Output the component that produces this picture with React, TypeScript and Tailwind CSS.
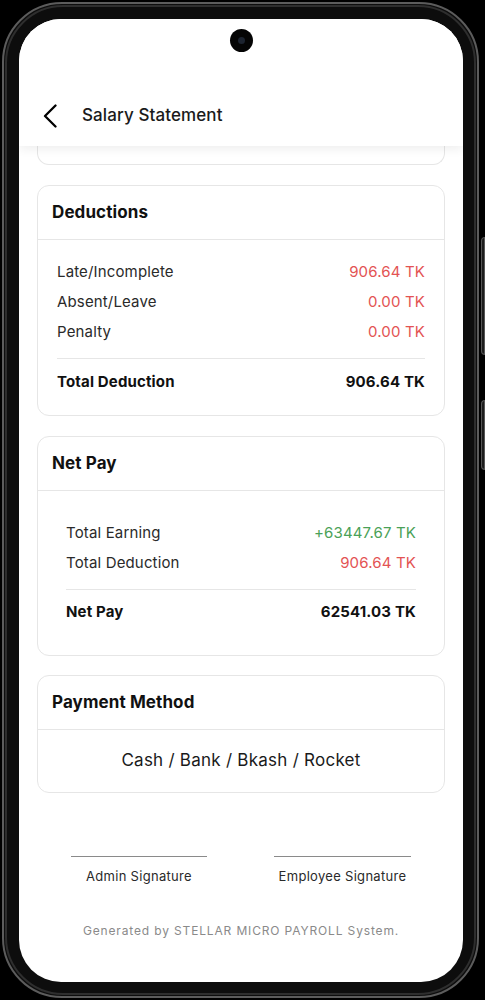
const deductions = [
  { label: 'Late/Incomplete', value: '906.64 TK' },
  { label: 'Absent/Leave', value: '0.00 TK' },
  { label: 'Penalty', value: '0.00 TK' },
];

function Row({ label, value, color }: { label: string; value: string; color: string }) {
  return (
    <div className="flex h-[30px] items-center justify-between text-[15px] tracking-[0.15px]">
      <span className="text-[#2a2a2a]">{label}</span>
      <span className={color}>{value}</span>
    </div>
  );
}

function CardHeader({ title }: { title: string }) {
  return (
    <div className="flex h-[54px] items-center border-b border-[#e6e6e6] px-[14px]">
      <h2 className="text-[17px] font-bold tracking-[0.1px] text-[#111]">{title}</h2>
    </div>
  );
}

export default function App() {
  return (
    <div
      className="relative h-[1000px] w-[485px] overflow-hidden bg-black pl-[2px] pt-[2px]"
      style={{ fontFamily: 'Inter, "Noto Sans", sans-serif' }}
    >
      {/* side buttons */}
      <div className="absolute right-0 top-[237px] h-[118px] w-[4px] rounded-l-sm border border-[#555] bg-[#1c1c1c]" />
      <div className="absolute right-0 top-[400px] h-[70px] w-[4px] rounded-l-sm border border-[#555] bg-[#1c1c1c]" />

      {/* Phone body */}
      <div className="h-[996px] w-[477px] rounded-[60px] border-2 border-[#5c5c5c] bg-[#0d0d0d] p-[1px]">
        <div className="h-full w-full rounded-[58px] border-[2px] border-[#2e2e2e] px-[12px] pt-[12px]">
          {/* Screen */}
          <div className="relative flex h-[963px] w-[444px] flex-col overflow-hidden rounded-[42px] bg-white">
            {/* Camera */}
            <div className="absolute left-[211px] top-[10px] z-20 flex h-[23px] w-[23px] items-center justify-center rounded-full bg-[#050505]">
              <div className="h-[7px] w-[7px] rounded-full bg-[#1d2430]" />
            </div>

            {/* Header */}
            <header className="relative z-10 bg-white pt-[75px] pb-[8px] shadow-[0_3px_10px_rgba(0,0,0,0.07)]">
              <div className="flex h-[44px] items-center px-[24px]">
                <svg width="14" height="24" viewBox="0 0 14 24" fill="none">
                  <path d="M12.5 1.5 L2 12 L12.5 22.5" stroke="#000" strokeWidth="2.3" strokeLinecap="round" strokeLinejoin="round" />
                </svg>
                <span className="ml-[25px] text-[17px] font-medium tracking-[0.1px] text-[#1a1a1a]">Salary Statement</span>
              </div>
            </header>

            {/* Content */}
            <main className="flex flex-1 flex-col px-[18px]">
              <div className="h-[19px] rounded-b-[12px] border border-t-0 border-[#e6e6e6]" />

              {/* Deductions */}
              <section className="mt-[20px] rounded-[12px] border border-[#e6e6e6]">
                <CardHeader title="Deductions" />
                <div className="px-[19px] pt-[17px] pb-[22px]">
                  {deductions.map((d) => (
                    <Row key={d.label} label={d.label} value={d.value} color="text-[#e35353]" />
                  ))}
                  <div className="mt-[11px] border-t border-[#e6e6e6]" />
                  <div className="mt-[12px] flex h-[22px] items-center justify-between text-[15px] font-bold tracking-[0.15px] text-[#111]">
                    <span>Total Deduction</span>
                    <span>906.64 TK</span>
                  </div>
                </div>
              </section>

              {/* Net Pay */}
              <section className="mt-[20px] rounded-[12px] border border-[#e6e6e6]">
                <CardHeader title="Net Pay" />
                <div className="px-[28px] pt-[27px] pb-[32px]">
                  <Row label="Total Earning" value="+63447.67 TK" color="text-[#4aa157]" />
                  <Row label="Total Deduction" value="906.64 TK" color="text-[#e35353]" />
                  <div className="mt-[11px] border-t border-[#e6e6e6]" />
                  <div className="mt-[11px] flex h-[22px] items-center justify-between text-[15px] font-bold tracking-[0.15px] text-[#111]">
                    <span>Net Pay</span>
                    <span>62541.03 TK</span>
                  </div>
                </div>
              </section>

              {/* Payment Method */}
              <section className="mt-[19px] rounded-[12px] border border-[#e6e6e6]">
                <CardHeader title="Payment Method" />
                <div className="flex h-[62px] items-center justify-center text-[17px] tracking-[0.25px] text-[#1a1a1a]">
                  Cash / Bank / Bkash / Rocket
                </div>
              </section>

              {/* Signatures */}
              <div className="mt-[63px] flex justify-between px-[34px]">
                <div className="flex w-[136px] flex-col items-center">
                  <div className="w-full border-t-[1.5px] border-[#8a8a8a]" />
                  <span className="mt-[10px] text-[13px] tracking-[0.3px] text-[#2a2a2a]">Admin Signature</span>
                </div>
                <div className="flex w-[137px] flex-col items-center">
                  <div className="w-full border-t-[1.5px] border-[#8a8a8a]" />
                  <span className="mt-[10px] text-[13px] tracking-[0.3px] text-[#2a2a2a]">Employee Signature</span>
                </div>
              </div>

              <p className="mt-[35px] text-center text-[12px] tracking-[0.85px] text-[#8a8a8a]">
                Generated by STELLAR MICRO PAYROLL System.
              </p>
            </main>
          </div>
        </div>
      </div>
    </div>
  );
}
